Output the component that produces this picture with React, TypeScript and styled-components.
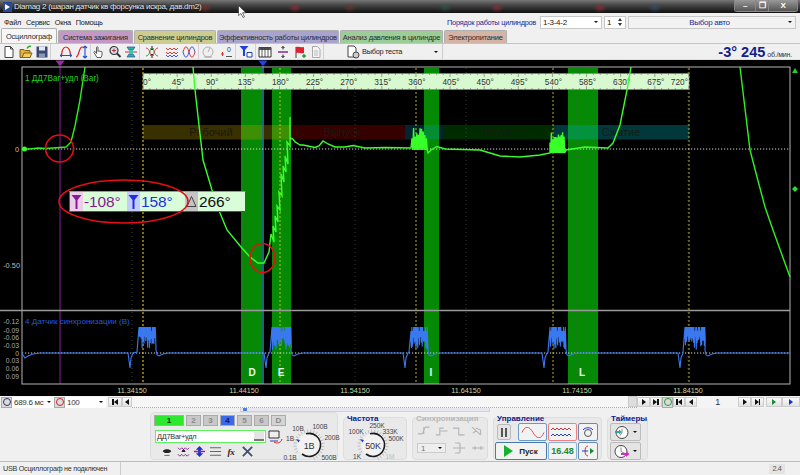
import React from "react";
import styled, { createGlobalStyle } from "styled-components";

const SANS = `"Liberation Sans", Arial, sans-serif`;

const Global = createGlobalStyle`
  html, body { margin: 0; padding: 0; background: #f0f0f0; overflow: hidden; }
  #root { width: 800px; height: 475px; }
  * { box-sizing: border-box; }
`;

const Win = styled.div`
  width: 800px; height: 475px; display: flex; flex-direction: column; position: relative;
  background: #f0f0f0; font-family: ${SANS}; font-size: 7.4px; letter-spacing: -.28px; color: #222; overflow: hidden;
`;
const TitleBar = styled.div`
  height: 13px; flex: none; display: flex; align-items: center; padding-left: 3px; gap: 2px;
  background:
    radial-gradient(ellipse 7px 5px at 205px 8px, rgba(150,40,40,.6), transparent),
    radial-gradient(ellipse 7px 5px at 295px 8px, rgba(170,40,60,.6), transparent),
    radial-gradient(ellipse 7px 5px at 350px 8px, rgba(130,50,40,.5), transparent),
    radial-gradient(ellipse 7px 5px at 445px 8px, rgba(40,100,70,.5), transparent),
    radial-gradient(ellipse 7px 5px at 497px 8px, rgba(170,40,70,.6), transparent),
    radial-gradient(ellipse 7px 5px at 600px 8px, rgba(170,40,60,.6), transparent),
    radial-gradient(ellipse 7px 5px at 655px 8px, rgba(50,90,130,.5), transparent),
    linear-gradient(#777 0, #4a4a4a 35%, #1c1c1c 85%, #111 100%);
`;
const TitleText = styled.span`
  color: #e8e8e8; font-size: 8px; letter-spacing: -.25px; white-space: nowrap; flex: 1; text-shadow: 0 0 2px #000;
`;
const WinButtons = styled.div`
  display: flex; align-self: flex-start; height: 12px; margin-right: 2px; border: 1px solid #888; border-top: 0; border-radius: 0 0 3px 3px; overflow: hidden;
`;
const WinBtn = styled.div<{ $w: number }>`
  width: ${p => p.$w}px; display: flex; align-items: center; justify-content: center; color: #fff; font-size: 8px; font-weight: bold;
  background: linear-gradient(#999, #555); border-right: 1px solid #888; &:last-child { border-right: 0; }
`;
const Cursor = styled.svg` position: absolute; left: 238px; top: 5px; `;

const MenuRow = styled.div`
  height: 16px; flex: none; display: flex; align-items: center; padding: 2px 2px 0 4px; background: #f0f0f0;
`;
const MenuItem = styled.span` margin-right: 5px; color: #222; `;
const OrderLabel = styled.span` margin-left: auto; color: #1a2a9a; margin-right: 4px; white-space: nowrap; `;
const Select = styled.div<{ $w: number; $blue?: boolean }>`
  width: ${p => p.$w}px; height: 13px; margin-right: 2px; padding: 0 3px 0 2px; background: ${p => (p.$blue ? "#f2f2f2" : "#fff")};
  border: 1px solid #c8c8c8; display: flex; align-items: center; justify-content: space-between;
  color: ${p => (p.$blue ? "#1a2a9a" : "#222")}; font-size: 8px;
`;
const CenterText = styled.span` flex: 1; text-align: center; `;
const LeftText = styled.span` flex: 1; white-space: nowrap; `;
const Arrow = styled.span`
  width: 0; height: 0; flex: none; border-left: 2.5px solid transparent; border-right: 2.5px solid transparent; border-top: 2.5px solid #111;
`;
const SpinArrows = styled.span`
  display: flex; flex-direction: column; gap: 2px;
  &::before { content: ""; border-left: 2.5px solid transparent; border-right: 2.5px solid transparent; border-bottom: 3px solid #333; }
  &::after { content: ""; border-left: 2.5px solid transparent; border-right: 2.5px solid transparent; border-top: 3px solid #333; }
`;

const TabsRow = styled.div`
  height: 15px; flex: none; display: flex; align-items: flex-end; padding-left: 1px; gap: 1px; background: #f0f0f0; border-bottom: 1px solid #c4c4c4;
`;
const Tab = styled.div<{ $w: number; $bg: string; $active?: boolean }>`
  width: ${p => p.$w}px; height: ${p => (p.$active ? 15 : 13)}px; background: ${p => p.$bg}; border: 1px solid #b0b0b0; border-bottom: 0; border-radius: 2px 2px 0 0;
  display: flex; align-items: center; justify-content: center; font-size: 7.5px; letter-spacing: -.2px; color: #2c2c2c; white-space: nowrap; overflow: hidden;
`;

const Toolbar = styled.div`
  height: 16px; flex: none; display: flex; align-items: center; padding-left: 1px; background: #f0f0f0; border-bottom: 1px solid #ddd;
`;
const ToolBtn = styled.div<{ $w: number; $sep?: boolean }>`
  width: ${p => p.$w}px; height: 15px; display: flex; align-items: center; justify-content: center; flex: none;
  border-right: ${p => (p.$sep ? "1px solid #d0d0d0" : "0")};
`;
const TestSelect = styled.div`
  width: 97px; height: 15px; margin-left: 22px; display: flex; align-items: center; gap: 1px; color: #222; border-right: 1px solid #ccc; padding-right: 4px; flex: none;
`;
const Spacer = styled.div` flex: 1; `;
const Rpm = styled.div`
  color: #10208c; font-weight: bold; font-size: 14.5px; letter-spacing: 0; display: flex; align-items: baseline; gap: 2px; padding-right: 8px; white-space: nowrap;
`;
const RpmUnit = styled.span` font-size: 7px; letter-spacing: -.2px; font-weight: normal; color: #333; `;

const Scope = styled.div` height: 336px; flex: none; background: #000; position: relative; `;
const ScopeSvg = styled.svg` display: block; letter-spacing: 0; font-family: ${SANS}; `;
const OverlaySvg = styled(ScopeSvg)` position: absolute; left: 0; top: 0; `;
const Readout = styled.div`
  position: absolute; left: 69px; top: 131px; width: 177px; height: 21px; background: #d9fdd9; border: 1px solid #555; border-top-color: #999;
  display: flex; align-items: center; font-size: 15.5px; letter-spacing: -.1px;
`;
const Mark = styled.span<{ $bg: string }>`
  width: 13px; height: 19px; background: ${p => p.$bg}; display: flex; align-items: center; justify-content: center; flex: none;
`;
const RVal = styled.span<{ $c: string; $w: number }>` color: ${p => p.$c}; width: ${p => p.$w}px; padding-left: 1px; white-space: nowrap; flex: none; `;

const Transport = styled.div`
  height: 12px; flex: none; display: flex; align-items: center; background: #f4f4f4; padding-left: 1px;
`;
const RoundBtn = styled.div<{ $c: string }>`
  width: 11px; height: 11px; flex: none; background: #dcdcdc; border: 1px solid #aaa; display: flex; align-items: center; justify-content: center;
  &::after { content: ""; width: 6px; height: 6px; border-radius: 50%; border: 1.5px solid ${p => p.$c}; }
`;
const TField = styled.div<{ $w: number }>`
  width: ${p => p.$w}px; height: 11px; padding: 0 3px 0 2px; background: #fff; display: flex; align-items: center; justify-content: space-between; color: #333; flex: none; white-space: nowrap; font-size: 8px;
`;
const NavBtn = styled.div<{ $w?: number; $ml?: number }>`
  width: ${p => p.$w ?? 12}px; height: 10px; margin-left: ${p => p.$ml ?? 0}px; flex: none; background: linear-gradient(#fafafa, #e2e2e2); border: 1px solid #ccc;
  display: flex; align-items: center; justify-content: center;
`;
const Tri = styled.span<{ $c?: string; $left?: boolean }>`
  width: 0; height: 0; border-top: 3px solid transparent; border-bottom: 3px solid transparent;
  ${p => (p.$left ? `border-right: 4px solid ${p.$c ?? "#111"};` : `border-left: 4px solid ${p.$c ?? "#111"};`)}
`;
const Bar = styled.span` width: 1.5px; height: 6px; background: #111; `;
const NavValue = styled.div` width: 41px; text-align: center; font-size: 9px; color: #333; flex: none; `;
const ScrollTrack = styled.div`
  flex: 1; height: 100%; background: #f6f6f6; position: relative; border-bottom: 1px dotted #aab;
`;
const Thumb = styled.div` position: absolute; right: 0; top: 0; width: 9px; height: 11px; background: #ddd; border: 1px solid #ccc; `;

const Panel = styled.div`
  height: 54px; flex: none; display: flex; align-items: stretch; gap: 5px; padding: 4px 0 1px 150px; background: #f0f0f0; position: relative; border-bottom: 1px solid #bbb;
`;
const SliderMini = styled.div`
  position: absolute; left: 240px; top: 0; width: 250px; height: 4px; background: #e6e6f0; border: 1px solid #d0d0d8; border-top: 0; border-radius: 1px;
  &::after { content: ""; position: absolute; left: 2px; top: 0; width: 4px; height: 3px; background: #4a80d8; }
`;
const Group = styled.div<{ $w: number }>`
  width: ${p => p.$w}px; flex: none; background: #e9e9e9; border: 1px solid #ddd; border-radius: 4px; position: relative; padding: 2px 3px;
`;
const GroupPlain = styled(Group)` margin-top: 5px; padding-top: 5px; `;
const GroupTitle = styled.div<{ $dim?: boolean }>`
  position: absolute; left: 3px; top: -4px; font-weight: bold; font-size: 8px; letter-spacing: 0; color: ${p => (p.$dim ? "#b8b8b8" : "#10208c")}; white-space: nowrap;
`;
const ChannelRow = styled.div` display: flex; gap: 2px; margin-bottom: 4px; `;
const ChannelBtn = styled.div<{ $bg: string; $w: number; $c?: string }>`
  width: ${p => p.$w}px; height: 11px; background: ${p => p.$bg}; border: 1px solid #aaa; display: flex; align-items: center; justify-content: center;
  font-size: 8px; letter-spacing: 0; font-weight: bold; color: ${p => p.$c ?? "#888"};
`;
const ChannelInput = styled.div`
  width: 111px; height: 13px; margin-left: 1px; border: 1.5px solid #5ef05e; background: #fff; display: flex; align-items: center; justify-content: space-between; padding-left: 1px; color: #333;
`;
const MiniBtn = styled.div` width: 10px; height: 9px; background: #e4e4e4; border-bottom: 2px solid #777; margin-right: 1px; `;
const IconRow = styled.div` display: flex; margin-top: 2px; margin-left: 5px; `;
const IconCell = styled.div` width: 16px; height: 13px; display: flex; align-items: center; justify-content: center; `;
const FxLabel = styled.em` font-family: "Liberation Serif", serif; font-weight: bold; font-size: 9px; color: #222; `;
const ChannelLink = styled.svg` position: absolute; left: 117px; top: 17px; `;
const DialSlot = styled.div<{ $l: number; $t: number }>` position: absolute; left: ${p => p.$l}px; top: ${p => p.$t}px; `;
const DialSvg = styled.svg` display: block; overflow: visible; letter-spacing: -.15px; font-family: ${SANS}; `;
const SyncGrid = styled.div` display: grid; grid-template-columns: 35px 19px 16px; grid-template-rows: 16px; margin-top: 3px; margin-left: 1px; `;
const SyncSelect = styled.div`
  width: 29px; height: 10px; border: 1px solid #ccc; margin-top: 2px; background: #eee; display: flex; align-items: center; justify-content: space-between; padding: 0 3px; color: #777; font-size: 8px;
`;
const SyncIcons = styled.div` display: flex; gap: 3px; margin-top: 1px; margin-left: 1px; `;
const CtrlGrid = styled.div` display: grid; grid-template-columns: 52px 29px 20px; grid-template-rows: 18px 18px; column-gap: 1px; row-gap: 1px; margin-left: -2px; `;
const CtrlTop = styled.div` display: flex; gap: 7px; align-items: center; padding-left: 2px; `;
const PauseBtn = styled.div`
  width: 14px; height: 16px; flex: none; background: #e4e4e4; border: 1px solid #bbb; border-radius: 2px; display: flex; align-items: center; justify-content: center; gap: 2px;
  &::before, &::after { content: ""; width: 2px; height: 9px; background: #555; }
`;
const CtrlBtn = styled.div<{ $b?: string }>`
  width: 100%; height: 18px; border: 1.5px solid ${p => p.$b ?? "#6a9ac8"}; border-radius: 2px; background: #f2f2f2; display: flex; align-items: center; justify-content: center; gap: 6px; font-weight: bold; color: #222; font-size: 8px; letter-spacing: 0;
`;
const SineBtn = styled(CtrlBtn)` width: 29px; flex: none; `;
const TimeValue = styled.span` color: #1a8a2a; font-size: 9px; `;
const PlayTri = styled.span`
  width: 0; height: 0; border-top: 6px solid transparent; border-bottom: 6px solid transparent; border-left: 9px solid #19b030;
`;
const TimerBtn = styled.div`
  width: 31px; height: 18px; margin-bottom: 1px; background: #e4e4e4; border: 1px solid #bbb; border-radius: 2px; display: flex; align-items: center; justify-content: center; gap: 3px;
`;
const TimerWrap = styled.div` margin-left: -1px; `;

const StatusBar = styled.div`
  flex: 1; display: flex; align-items: center; background: #f0f0f0; font-size: 7.2px; letter-spacing: -.25px; color: #333; padding-left: 3px;
`;
const StatusCell = styled.div` width: 118px; height: 100%; display: flex; align-items: center; border-right: 1px solid #ccc; white-space: nowrap; `;
const StatusVer = styled.div` margin-left: auto; margin-right: 15px; width: 16px; text-align: center; background: #e4e4e4; height: 10px; line-height: 10px; color: #555; `;

/* ---------- waveforms ---------- */
const pts = (a: number[][]) => a.map(p => p.join(",")).join(" ");
function burst(x0: number, x1: number, base: number, top: number, step: number, seed: number) {
  const out: number[][] = [];
  let i = seed;
  for (let x = x0; x < x1; x += step) {
    const env = Math.sin(((x - x0) / (x1 - x0)) * Math.PI * 2.4 + 0.4);
    i = (i * 37 + 11) % 101;
    const h = top + (base - top) * (0.1 + (i / 101) * 0.45 + 0.25 * (1 - Math.abs(env)));
    out.push([x, h], [x + step / 2, base + 1]);
  }
  return out;
}
function flatBurst(x0: number, x1: number, base: number, top: number, seed: number) {
  const out: number[][] = [];
  let i = seed;
  for (let x = x0; x < x1; x += 0.9) {
    i = (i * 37 + 11) % 101;
    const low = base - (i / 101) * 14;
    out.push([x, i % 7 === 0 ? top + 4 : top], [x + 0.45, low]);
  }
  return out;
}
function noisySlope(a: number[][]) {
  const out: number[][] = [];
  a.forEach(([x, y], k) => {
    out.push([x + (k % 2 ? 1 : -1), y + (k % 2 ? 6 : -6)]);
  });
  return out;
}
const mainTrace = pts([
  [22, 149], [30, 149], [38, 148], [46, 148.5], [60, 147.5], [66, 147], [71, 142], [75, 126], [80, 100], [85, 67],
]);
const mainTrace2 = pts([
  [193, 67], [195, 90], [203, 160], [212, 190], [220, 213], [227, 230], [241, 247], [250, 257], [258, 263], [264, 263], [269, 252],
  ...noisySlope([[272, 240], [273, 236], [274, 232], [275, 226], [276, 222], [277, 216], [278, 212], [279, 204], [280, 198], [281, 190], [282, 180], [283, 176], [284, 172], [285, 166], [286, 162], [287, 158], [288, 148], [289, 140]]),
  [290, 117], [290, 138], [293, 139], [295, 142], [297, 143], [300, 145], [303, 145], [308, 146], [315, 147.5], [319, 146], [323, 141], [328, 144], [335, 147], [345, 147], [353, 145.5], [365, 148], [385, 147.5], [411, 148],
  ...burst(412, 428, 149, 125, 1.6, 7),
  [428, 153], [431, 150], [437, 146.5], [445, 149], [480, 150], [490, 153], [500, 156], [520, 157], [540, 155], [550, 153],
  ...burst(550, 565, 152, 125, 1.4, 13),
  [566, 150], [585, 147], [608, 148], [613, 143], [620, 125], [627, 90], [631, 67],
]);
const mainTrace3 = pts([[740, 67], [750, 150], [757, 177], [765, 207], [773, 230], [782, 255], [790, 277]]);

function syncTrace() {
  const out: number[][] = [[22, 353], [23, 355], [25, 358], [28, 356], [33, 354], [40, 353]];
  const cycles = [[130, 139, 156], [266, 272, 291], [405, 411, 428], [544, 550, 566], [680, 685, 705]];
  cycles.forEach(([s, b0, b1], n) => {
    out.push([s - 2, 353], [s, 368], [s + 1, 358], [s + 3, 353]);
    out.push([b0 - 2, 352], ...flatBurst(b0, b1, 350, 327, 5 + n * 3));
    out.push([b1, 350], [b1 + 1, 355], [b1 + 3, 356], [b1 + 7, 354], [b1 + 12, 353]);
  });
  out.push([790, 353]);
  return pts(out);
}

const columns = [[241, 23], [272, 19], [424, 15], [568, 30]];
const zones = [
  { x: 143, w: 148, f: "rgba(190,160,0,.3)", t: "Рабочий", cx: 211 },
  { x: 291, w: 114, f: "rgba(180,0,0,.3)", t: "Выпуск", cx: 342 },
  { x: 405, w: 38, f: "rgba(0,150,190,.25)", t: "", cx: 0 },
  { x: 443, w: 110, f: "rgba(0,140,0,.3)", t: "Впуск", cx: 498 },
  { x: 553, w: 136, f: "rgba(0,160,170,.35)", t: "Сжатие", cx: 621 },
];
const letters = [["D", 252], ["E", 281], ["I", 431], ["L", 582]] as const;
const stamps = [["11.34150", 132], ["11.44150", 244], ["11.54150", 355], ["11.64150", 466], ["11.74150", 577], ["11.84150", 688]] as const;
const deg = Array.from({ length: 17 }, (_, i) => i * 45);
const degX = (i: number) => 143 + i * 34.12;
const yTicks = [["-0.12", 321], ["-0.09", 330], ["-0.06", 337.5], ["-0.03", 345], ["0", 353], ["0.03", 360.5], ["0.06", 368], ["0.09", 376]] as const;

const ScopeView = () => (
  <ScopeSvg width={800} height={336} viewBox="0 60 800 336">
    {columns.map(([x, w]) => <rect key={x} x={x} y={68} width={w} height={316} fill="#068a06" />)}
    {stamps.map(([, x]) => <line key={x} x1={x} x2={x} y1={68} y2={384} stroke="#555" strokeWidth={.7} strokeDasharray="1 3" />)}
    {zones.map(z => <rect key={z.x} x={z.x} y={125} width={z.w} height={14.5} fill={z.f} />)}
    {zones.filter(z => z.t).map(z => <text key={z.x} x={z.cx} y={136} textAnchor="middle" fontSize={11} fill="#1a1a10">{z.t}</text>)}
    <line x1={143} x2={143} y1={68} y2={384} stroke="#b8a000" strokeWidth={1.4} strokeDasharray="2 2" />
    {[280, 416, 553, 689].map(x => <line key={x} x1={x} x2={x} y1={68} y2={384} stroke="#e4d820" strokeWidth={.8} strokeDasharray="2 2" />)}
    <line x1={60} x2={60} y1={66} y2={384} stroke="#8a1a9a" strokeWidth={1} />
    <line x1={263} x2={263} y1={66} y2={384} stroke="#2a50c8" strokeWidth={1.2} />
    <line x1={22} x2={790} y1={149} y2={149} stroke="#d8d8d8" strokeWidth={1} strokeDasharray="1.2 1.8" />
    <line x1={22} x2={790} y1={353} y2={353} stroke="#d8d8d8" strokeWidth={1} strokeDasharray="1.2 1.8" />
    <rect x={22} y={67} width={768} height={317} fill="none" stroke="#b4b4b4" strokeWidth={1} />
    <line x1={0} x2={790} y1={310.5} y2={310.5} stroke="#9a9a9a" strokeWidth={1.5} />

    <rect x={143} y={73.5} width={546} height={16} fill="#d8f9d0" stroke="#888" strokeWidth={.6} />
    {Array.from({ length: 81 }, (_, i) => {
      const x = 143 + i * 6.824;
      const long = i % 5 === 0;
      return (
        <g key={i}>
          <line x1={x} x2={x} y1={73.5} y2={long ? 77 : 75} stroke="#666" strokeWidth={.6} />
          <line x1={x} x2={x} y1={89.5} y2={long ? 86 : 88} stroke="#666" strokeWidth={.6} />
        </g>
      );
    })}
    {deg.map((d, i) => (
      <text key={d} x={i === 16 ? 688 : i === 0 ? 147 : degX(i) + 1} y={85} textAnchor={i === 16 ? "end" : "middle"} fontSize={8.3} fill="#333">{d}°</text>
    ))}

    <polyline points={mainTrace} fill="none" stroke="#30f020" strokeWidth={1.4} />
    <polyline points={mainTrace2} fill="none" stroke="#38ff28" strokeWidth={1.4} />
    <polyline points={mainTrace3} fill="none" stroke="#30f020" strokeWidth={1.4} />
    <circle cx={24.5} cy={149} r={2.5} fill="#38ff28" />
    <polyline points={syncTrace()} fill="none" stroke="#3a78f0" strokeWidth={1.1} />

    <text x={25} y={81} fontSize={8.2} fill="#22d022">1 ДД7Вar+удл (Вar)</text>
    <text x={25} y={324} fontSize={8.1} fill="#2a5ad8">4 Датчик синхронизации (В)</text>
    <text x={19} y={152} textAnchor="end" fontSize={7.4} fill="#bbb">0</text>
    <text x={20} y={268} textAnchor="end" fontSize={7.4} fill="#bbb">-0.50</text>
    {yTicks.map(([t, y]) => <text key={t} x={19} y={y + 2.5} textAnchor="end" fontSize={6.8} fill="#aaa">{t}</text>)}
    {letters.map(([l, x]) => <text key={l} x={x} y={376} textAnchor="middle" fontSize={10} fontWeight="bold" fill="#e8f8e8">{l}</text>)}
    {stamps.map(([t, x]) => <text key={t} x={x} y={393} textAnchor="middle" fontSize={7.2} fill="#c8d8a8">{t}</text>)}

    <path d="M55.5 60.5h9l-3 4v1h-3v-1z" fill="#9a2aa8" />
    <path d="M258.5 60.5h9l-3 4v1h-3v-1z" fill="#2040e8" />
    <path d="M792 73l3-5 3 5z" fill="#22d022" />
    <path d="M795 186l3 3-3 3-3-3z" fill="#22e022" />

    <ellipse cx={59.5} cy={148.5} rx={14} ry={13.5} fill="none" stroke="#e40f14" strokeWidth={1.6} />
    <ellipse cx={262.5} cy={258} rx={12.5} ry={14.5} fill="none" stroke="#e40f14" strokeWidth={1.6} />
  </ScopeSvg>
);

/* ---------- icons ---------- */
const Ic = ({ children, s = 14 }: { children: React.ReactNode; s?: number }) => (
  <svg width={s} height={s} viewBox="0 0 14 14" fill="none">{children}</svg>
);
const tools: { w: number; sep?: boolean; i: React.ReactNode }[] = [
  { w: 16, i: <Ic><path d="M3 1.500h5.500l2.500 2.500v8.500h-8z" stroke="#444" fill="#fff" /><path d="M8.500 1.500v2.500h2.500" stroke="#444" /></Ic> },
  { w: 17, i: <Ic><path d="M1 4.500h4l1 1h5v7h-10z" fill="#e0b040" stroke="#806010" /><path d="M3 12.500l2-4.500h8l-2 4.500z" fill="#f2d060" stroke="#806010" /><path d="M8 3.500c1-2 2.500-2.500 4-2" stroke="#2aa02a" strokeWidth={1.5} /></Ic> },
  { w: 17, sep: true, i: <Ic><path d="M1.500 1.500h11v11h-11z" fill="#3a4a70" /><path d="M4 1.500h6v4h-6z" fill="#e4e8f4" /><path d="M4 8.500h6v4h-6z" fill="#8a98b8" /></Ic> },
  { w: 6, i: null },
  { w: 17, i: <Ic><path d="M2.500 11c0-12 9-12 9 0" stroke="#d82020" strokeWidth={1.2} /><path d="M1 10.500h12M1 10.500l2-1.500M1 10.500l2 1.500M13 10.500l-2-1.500M13 10.500l-2 1.500" stroke="#2050d0" /></Ic> },
  { w: 17, sep: true, i: <Ic><path d="M1 12c3 0 3-10 6-10h1" stroke="#d82020" strokeWidth={1.2} /><path d="M10 1v12M10 1l-2 2M10 1l2 2M10 13l-2-2M10 13l2-2" stroke="#2050d0" strokeWidth={1.1} /></Ic> },
  { w: 16, i: <Ic><path d="M5 12.500l-3-5c-.5-1 1-1.500 1.500-.5l1 1.500v-6c0-1 1.500-1 1.500 0v4l.5-.5c.5-.5 1-.2 1 .3.500-.5 1-.2 1 .3.500-.4 1.500-.2 1.500.5v3l-1 2.400z" fill="#fff" stroke="#333" strokeWidth={.8} /></Ic> },
  { w: 16, i: <Ic><circle cx={6} cy={5.500} r={4} fill="#cfe0f4" stroke="#333" strokeWidth={1.2} /><path d="M9 8.500l3.500 3.500" stroke="#333" strokeWidth={2} /><path d="M4 5.500h4M6 3.500v4" stroke="#c03030" /></Ic> },
  { w: 17, sep: true, i: <Ic><path d="M3 2h8l-2 3h-4zM3 12h8l-2-3h-4z" fill="#30b0a0" stroke="#2050a0" strokeWidth={.7} /><path d="M1 7h12" stroke="#d03030" /><circle cx={7} cy={7} r={2.200} fill="#30c8b0" /></Ic> },
  { w: 24, i: <Ic><path d="M7 1v4M5.500 3.500l1.500 1.500 1.500-1.500M7 13v-4M5.500 10.500l1.500-1.500 1.500 1.500" stroke="#222" /><path d="M1 11c4 0 4-8 6-8s2 8 6 8" stroke="#30a040" /><path d="M1 3c4 0 4 8 6 8s2-8 6-8" stroke="#d84040" /></Ic> },
  { w: 15, i: <Ic><path d="M1 3l2 2 2-2 2 2 2-2 2 2 2-2M1 7l2 2 2-2 2 2 2-2 2 2 2-2" stroke="#d83a3a" /><path d="M1 10l2 2 2-2 2 2 2-2 2 2 2-2" stroke="#3a5ad8" /></Ic> },
  { w: 20, sep: true, i: <Ic><path d="M1 7c2-7 4-7 6 0s4 7 6 0" stroke="#d83a3a" /><path d="M1 7c2 7 4 7 6 0s4-7 6 0" stroke="#3a5ad8" /></Ic> },
  { w: 18, i: <Ic><circle cx={7} cy={7} r={5} stroke="#b0b0b0" /><path d="M7 7l2-4M3 12h8" stroke="#a8a8a8" /></Ic> },
  { w: 19, sep: true, i: <Ic><path d="M2 9h3M3.500 7v4" stroke="#d03030" /><path d="M7 11.500h6" stroke="#555" /><text x="8" y="7" fontSize="7" fontFamily="Liberation Sans" fill="#444">0</text></Ic> },
  { w: 20, sep: true, i: <Ic><path d="M0.500 1h9l-3.500 4v6h-2v-6z" fill="#2040d8" /><path d="M8 7.500h5v4.500h-5z" fill="#fff" stroke="#2040a0" /></Ic> },
  { w: 18, i: <Ic><path d="M1 2.500h12v9.500h-12z" fill="#fff" stroke="#333" /><path d="M1 2.500h12v2.500h-12z" fill="#555" /><path d="M4 3v9M7 3v9M10 3v9" stroke="#333" strokeWidth={.8} /></Ic> },
  { w: 17, i: <Ic><path d="M2 7h10" stroke="#7a1a9a" strokeWidth={1.4} /><path d="M7 1.500v3M5.500 3l1.500-1.500 1.500 1.500M7 12.500v-3M5.500 11l1.500 1.500 1.500-1.500" stroke="#222" /></Ic> },
  { w: 17, i: <Ic><path d="M3 13v-11" stroke="#444" /><path d="M3 2c3-1 5 1 8 0v6c-3 1-5-1-8 0z" fill="#e02030" /><path d="M9 11h4M11 9v4" stroke="#20a030" strokeWidth={1.4} /></Ic> },
  { w: 16, sep: true, i: <Ic><path d="M3.500 1.500h5l2.500 2.500v8.500h-7.500z" fill="#f4f4f4" stroke="#aaa" /><path d="M5 6h4M5 8h4M5 10h4" stroke="#bbb" /></Ic> },
];

const FlagMark = ({ c }: { c: string }) => (
  <svg width={11} height={16} viewBox="0 0 11 16"><path d="M.5 1h10l-4 5v9h-2v-9z" fill={c} /></svg>
);

const Dial = ({ labels, center }: { labels: { x: number; y: number; t: string; dim?: boolean }[]; center: string }) => {
  const cx = 29, cy = 29;
  return (
    <DialSvg width={58} height={46} viewBox="0 0 58 46">
      {Array.from({ length: 23 }, (_, i) => {
        const a = (-210 + i * 12.700) * Math.PI / 180;
        return <line key={i} x1={cx + 12.500 * Math.cos(a)} y1={cy + 12.500 * Math.sin(a)} x2={cx + 15.500 * Math.cos(a)} y2={cy + 15.500 * Math.sin(a)} stroke="#b8b8b8" strokeWidth={.9} />;
      })}
      <circle cx={cx} cy={cy} r={11.500} fill="#f2f2f2" />
      <path d={`M${cx - 7} ${cy + 9}A11.500 11.500 0 1 0 ${cx - 3} ${cy - 11.200}`} fill="none" stroke="#1a1a1a" strokeWidth={1.6} />
      <path d={`M${cx - 9} ${cy - 5}l-4-1 2.500 3.500z`} fill="#2040e0" />
      <text x={cx} y={cy + 3.500} textAnchor="middle" fontSize={9} fill="#333">{center}</text>
      {labels.map(l => <text key={l.t} x={l.x} y={l.y} textAnchor="middle" fontSize={6.6} fill={l.dim ? "#bbb" : "#444"}>{l.t}</text>)}
    </DialSvg>
  );
};

const SyncIcon = ({ d }: { d: string }) => (
  <svg width={15} height={14} viewBox="0 0 15 14" fill="none"><path d={d} stroke="#b4b4b4" strokeWidth={1.1} /></svg>
);

const App = () => (
  <Win>
    <Global />
    <TitleBar>
      <svg width={9} height={10} viewBox="0 0 9 10"><rect width={9} height={10} fill="#2a4a98" /><path d="M2 2l5 3-5 3z" fill="#fff" /></svg>
      <TitleText>Diamag 2 (шаран датчик кв форсунка искра, дав.dm2)</TitleText>
      <WinButtons>
        <WinBtn $w={21}>–</WinBtn>
        <WinBtn $w={13}>❐</WinBtn>
        <WinBtn $w={28}>X</WinBtn>
      </WinButtons>
    </TitleBar>
    <Cursor width={9} height={13} viewBox="0 0 9 13"><path d="M.5.500v10l2.500-2 2 4 1.500-.7-2-4h3.500z" fill="#fff" stroke="#222" strokeWidth={.6} /></Cursor>

    <MenuRow>
      <MenuItem>Файл</MenuItem>
      <MenuItem>Сервис</MenuItem>
      <MenuItem>Окна</MenuItem>
      <MenuItem>Помощь</MenuItem>
      <OrderLabel>Порядок работы цилиндров</OrderLabel>
      <Select $w={62}>1-3-4-2<Arrow /></Select>
      <Select $w={22}>1<SpinArrows /></Select>
      <Select $w={168} $blue><CenterText>Выбор авто</CenterText><Arrow /></Select>
    </MenuRow>

    <TabsRow>
      <Tab $w={56} $bg="#f6f6f6" $active>Осциллограф</Tab>
      <Tab $w={75} $bg="#c298c4">Система зажигания</Tab>
      <Tab $w={82} $bg="#cccc90">Сравнение цилиндров</Tab>
      <Tab $w={122} $bg="#aaa4cc">Эффективность работы цилиндров</Tab>
      <Tab $w={103} $bg="#9ccc98">Анализ давления в цилиндре</Tab>
      <Tab $w={63} $bg="#d4b4a4">Электропитание</Tab>
    </TabsRow>

    <Toolbar>
      {tools.map((t, i) => <ToolBtn key={i} $w={t.w} $sep={t.sep}>{t.i}</ToolBtn>)}
      <TestSelect>
        <svg width={15} height={14} viewBox="0 0 15 14" fill="none"><path d="M2 1h6l2 2v9h-8z" fill="#fff" stroke="#444" /><circle cx={10} cy={10} r={3} fill="#ccc" stroke="#444" /></svg>
        <LeftText>Выбор теста</LeftText>
        <Arrow />
      </TestSelect>
      <Spacer />
      <Rpm>-3° 245 <RpmUnit>об./мин.</RpmUnit></Rpm>
    </Toolbar>

    <Scope>
      <ScopeView />
      <Readout>
        <Mark $bg="#eccdea"><FlagMark c="#8a1a94" /></Mark>
        <RVal $c="#8a1a94" $w={44}>-108°</RVal>
        <Mark $bg="#c4ccfc"><FlagMark c="#1c30e0" /></Mark>
        <RVal $c="#1c30e0" $w={45}>158°</RVal>
        <Mark $bg="#c4c4c4"><svg width={11} height={13} viewBox="0 0 11 13"><path d="M5.500 1.500l4.500 10h-9z" fill="none" stroke="#444" /></svg></Mark>
        <RVal $c="#111" $w={40}>266°</RVal>
      </Readout>
      <OverlaySvg width={800} height={336} viewBox="0 60 800 336">
        <ellipse cx={123.500} cy={201.500} rx={64.500} ry={21.500} fill="none" stroke="#e40f14" strokeWidth={1.6} />
      </OverlaySvg>
    </Scope>

    <Transport>
      <RoundBtn $c="#30306a" />
      <TField $w={42}>689.6 мс<Arrow /></TField>
      <RoundBtn $c="#d02030" />
      <TField $w={41}>100<Arrow /></TField>
      <NavBtn $w={14} $ml={2}><Bar /><Tri $left /></NavBtn>
      <NavBtn $w={10}><Tri $left /></NavBtn>
      <ScrollTrack><Thumb /></ScrollTrack>
      <NavBtn $w={13}><Tri /></NavBtn>
      <NavBtn $w={12}><Tri /><Bar /></NavBtn>
      <RoundBtn $c="#20a030" />
      <NavBtn><Bar /><Tri $left /></NavBtn>
      <NavBtn><Tri $left /></NavBtn>
      <NavValue>1</NavValue>
      <NavBtn $w={13}><Tri /></NavBtn>
      <NavBtn $w={13}><Tri /><Bar /></NavBtn>
      <NavBtn $w={16} $ml={2}><Tri $c="#109030" /></NavBtn>
      <NavBtn $w={18}><Tri $c="#1030d0" /></NavBtn>
    </Transport>

    <Panel>
      <SliderMini />
      <Group $w={188}>
        <ChannelRow>
          <ChannelBtn $w={30} $bg="#2ee82e" $c="#0a3a0a">1</ChannelBtn>
          <ChannelBtn $w={15} $bg="#c8c8c8">2</ChannelBtn>
          <ChannelBtn $w={15} $bg="#c8c8c8">3</ChannelBtn>
          <ChannelBtn $w={15} $bg="#3a6ae8" $c="#0a1a5a">4</ChannelBtn>
          <ChannelBtn $w={15} $bg="#c8c8c8">5</ChannelBtn>
          <ChannelBtn $w={15} $bg="#c8c8c8">6</ChannelBtn>
          <ChannelBtn $w={15} $bg="#d4d4d4">D</ChannelBtn>
        </ChannelRow>
        <ChannelInput>ДД7Вar+удл<MiniBtn /></ChannelInput>
        <IconRow>
          <IconCell><Ic s={12}><path d="M2 6c2-3 8-3 10 0-2 3-8 3-10 0z" fill="#222" /><path d="M4 11h6" stroke="#555" /></Ic></IconCell>
          <IconCell><Ic s={13}><path d="M1 3l2 2 2-2 2 2 2-2 2 2 2-2M1 10l2 2 2-2 2 2 2-2 2 2 2-2" stroke="#8a1a9a" /><path d="M5 7h4M7 5l-1.500 1.500h3z" fill="#222" stroke="#222" /></Ic></IconCell>
          <IconCell><Ic s={13}><path d="M7 1l4 4h-2.500v4h2.500l-4 4-4-4h2.500v-4h-2.500z" fill="#1c30d0" /><path d="M1 7h12" stroke="#9a1a9a" strokeWidth={1.6} /></Ic></IconCell>
          <IconCell><Ic s={13}><path d="M1 3h12M1 7h12M1 11h12" stroke="#666" strokeWidth={1.2} /></Ic></IconCell>
          <IconCell><FxLabel>fx</FxLabel></IconCell>
          <IconCell><Ic s={13}><path d="M2 2l10 10M12 2l-10 10" stroke="#405070" strokeWidth={2} /></Ic></IconCell>
        </IconRow>
        <ChannelLink width={16} height={16} viewBox="0 0 16 16" fill="none"><path d="M1 1h10v7h-10z" fill="#eee" stroke="#333" /><path d="M6 12c3 2 7 1 8-3" stroke="#e02020" /><path d="M2 11h8" stroke="#2040c0" /></ChannelLink>
        <DialSlot $l={129} $t={3}>
          <Dial center="1В" labels={[
            { x: 18, y: 14.5, t: "10В" }, { x: 40, y: 12.5, t: "100В" }, { x: 52, y: 23.5, t: "200В" },
            { x: 49, y: 43.5, t: "500В" }, { x: 10, y: 43.5, t: "0.1В" }, { x: 10, y: 24.5, t: "1В" },
          ]} />
        </DialSlot>
      </Group>
      <GroupPlain $w={64}>
        <GroupTitle>Частота</GroupTitle>
        <DialSlot $l={0} $t={-2}>
          <Dial center="50K" labels={[
            { x: 33, y: 11.5, t: "250K" }, { x: 12, y: 17.5, t: "100K" }, { x: 46, y: 17.5, t: "333K" },
            { x: 52, y: 24.5, t: "500K" }, { x: 13, y: 42.5, t: "1K" }, { x: 46, y: 42.5, t: "1M", dim: true },
          ]} />
        </DialSlot>
      </GroupPlain>
      <GroupPlain $w={76}>
        <GroupTitle $dim>Синхронизация</GroupTitle>
        <SyncIcons>
          <SyncIcon d="M1 10h4c2 0 2-7 4-7h4M7 3v7" />
          <SyncIcon d="M1 11h4v-7h4M5 7h8" />
          <SyncIcon d="M1 4h6v7h6M7 8v-3" />
          <SyncIcon d="M2 3l9 8M6 4l5 2v5M3 9l3-2" />
        </SyncIcons>
        <SyncGrid>
          <SyncSelect>1<Arrow /></SyncSelect>
          <SyncIcon d="M3 2h5M1 7h12M3 12h5M8 2v10" />
          <SyncIcon d="M1 7h12M4 5v4M10 5v4" />
        </SyncGrid>
      </GroupPlain>
      <GroupPlain $w={109}>
        <GroupTitle>Управление</GroupTitle>
        <CtrlGrid>
          <CtrlTop>
            <PauseBtn />
            <SineBtn>
              <svg width={24} height={11} viewBox="0 0 24 11" fill="none"><path d="M1 5.500c3-7 7-7 11 0s8 7 11 0" stroke="#e05050" /></svg>
            </SineBtn>
          </CtrlTop>
          <CtrlBtn $b="#f08080">
            <svg width={25} height={12} viewBox="0 0 25 12" fill="none"><path d="M1 4l2-2 2 2 2-2 2 2 2-2 2 2 2-2 2 2 2-2 2 2" stroke="#e03030" /><path d="M1 10l2-2 2 2 2-2 2 2 2-2 2 2 2-2 2 2 2-2 2 2" stroke="#2040d0" /></svg>
          </CtrlBtn>
          <CtrlBtn $b="#6a8ab0">
            <svg width={14} height={14} viewBox="0 0 14 14" fill="none"><path d="M2 5c2-3 8-3 10 0" stroke="#2040d0" /><circle cx={7} cy={8} r={3.500} stroke="#555" /></svg>
          </CtrlBtn>
          <CtrlBtn $b="#4a7aa8"><PlayTri /><span>Пуск</span></CtrlBtn>
          <CtrlBtn $b="#8ab4d8"><TimeValue>16.48</TimeValue></CtrlBtn>
          <CtrlBtn $b="#6a8ab0">
            <svg width={14} height={14} viewBox="0 0 14 14" fill="none"><path d="M7 2c-4 0-4 10 0 10" stroke="#e03030" /><path d="M1 7h6" stroke="#2040d0" /><path d="M9 4l4 3-4 3z" fill="#109030" /></svg>
          </CtrlBtn>
        </CtrlGrid>
      </GroupPlain>
      <GroupPlain $w={41}>
        <GroupTitle>Таймеры</GroupTitle>
        <TimerWrap>
          <TimerBtn>
            <svg width={16} height={15} viewBox="0 0 16 15" fill="none"><circle cx={8} cy={7.500} r={6} fill="#fff" stroke="#444" /><path d="M8 7.500v-4M8 7.500l-2 3" stroke="#888" /><path d="M1 6h4v-1.500l3 2.500-3 2.500v-1.500h-4z" fill="#30a8a0" /></svg>
            <Arrow />
          </TimerBtn>
          <TimerBtn>
            <svg width={16} height={15} viewBox="0 0 16 15" fill="none"><circle cx={7} cy={7.500} r={6} fill="#fff" stroke="#444" /><path d="M7 7.500v-4M7 7.500l4 2" stroke="#888" /><path d="M7 9h5v-2l3.500 3-3.500 3v-2h-5z" fill="#d030c8" /></svg>
            <Arrow />
          </TimerBtn>
        </TimerWrap>
      </GroupPlain>
    </Panel>

    <StatusBar>
      <StatusCell>USB Осциллограф не подключен</StatusCell>
      <StatusVer>2.4</StatusVer>
    </StatusBar>
  </Win>
);

export default App;
